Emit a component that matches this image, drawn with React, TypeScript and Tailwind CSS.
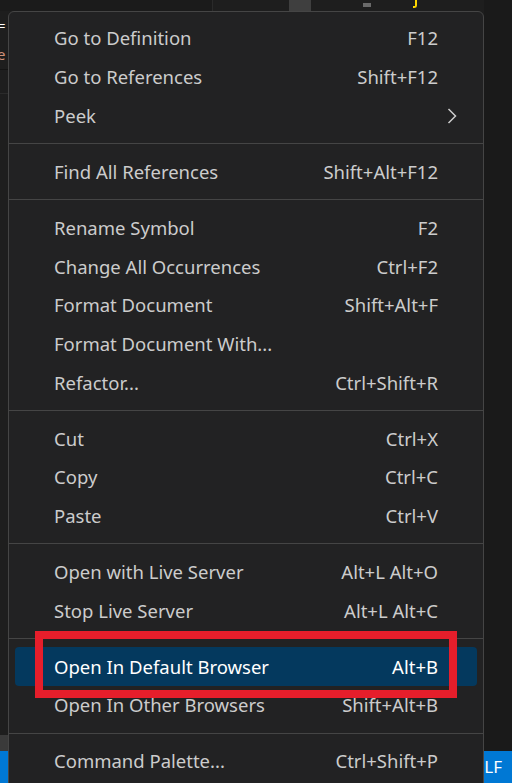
import React from "react";

type Item = { label: string; keys?: string; submenu?: boolean; active?: boolean };

const groups: Item[][] = [
  [
    { label: "Go to Definition", keys: "F12" },
    { label: "Go to References", keys: "Shift+F12" },
    { label: "Peek", submenu: true },
  ],
  [{ label: "Find All References", keys: "Shift+Alt+F12" }],
  [
    { label: "Rename Symbol", keys: "F2" },
    { label: "Change All Occurrences", keys: "Ctrl+F2" },
    { label: "Format Document", keys: "Shift+Alt+F" },
    { label: "Format Document With..." },
    { label: "Refactor...", keys: "Ctrl+Shift+R" },
  ],
  [
    { label: "Cut", keys: "Ctrl+X" },
    { label: "Copy", keys: "Ctrl+C" },
    { label: "Paste", keys: "Ctrl+V" },
  ],
  [
    { label: "Open with Live Server", keys: "Alt+L Alt+O" },
    { label: "Stop Live Server", keys: "Alt+L Alt+C" },
  ],
  [
    { label: "Open In Default Browser", keys: "Alt+B", active: true },
    { label: "Open In Other Browsers", keys: "Shift+Alt+B" },
  ],
  [{ label: "Command Palette...", keys: "Ctrl+Shift+P" }],
];

const MenuRow = ({ item }: { item: Item }) => (
  <div
    className={`mx-[6px] h-[38.7px] flex items-center justify-between rounded-[4px] pl-[39px] pr-[20px] ${
      item.active ? "bg-[#04395e] text-white" : "text-[#cccccc]"
    }`}
  >
    <span>{item.label}</span>
    <div className="flex items-center">
      <span>{item.keys}</span>
      <div className="w-[19px] flex justify-end">
        {item.submenu && (
          <svg width="10" height="16" viewBox="0 0 10 16" fill="none">
            <path d="M1.5 1 L8.5 8 L1.5 15" stroke="#cccccc" strokeWidth="1.5" />
          </svg>
        )}
      </div>
    </div>
  </div>
);

export default function App() {
  return (
    <div
      className="relative w-[512px] h-[783px] overflow-hidden bg-[#1e1e1e]"
      style={{ fontFamily: '"Noto Sans", "Open Sans", sans-serif' }}
    >
      {/* Editor behind the menu */}
      <div className="flex flex-col h-full">
        <div className="flex flex-1">
          <div className="flex-1 flex flex-col">
            {/* top strip */}
            <div className="h-[11px] flex">
              <div className="w-[212px] bg-[#1b1b1b]" />
              <div className="w-px bg-[#2a2a2a]" />
              <div className="w-[76px]" />
              <div className="w-[22px] bg-[#3f3f3f]" />
              <div className="w-[52px]" />
              <div className="w-[8px] h-[4px] mt-[3px] bg-[#6a6a6a]" />
              <div className="w-[42px]" />
              <div className="w-[4px] h-[8px] mt-0 border-r-2 border-b-2 border-[#ffd700] rounded-br-[3px]" />
            </div>
            {/* left gutter */}
            <div className="flex-1 flex flex-col w-[9px] text-[15px] leading-none">
              <div className="h-[7px]" />
              <span className="text-white -ml-[3px]">=</span>
              <div className="h-[14px]" />
              <span className="text-[#ce9178] -ml-[3px]">e</span>
              <div className="h-[8px] border-b border-[#141414]" />
              <div className="h-[24px] border-b border-[#2b2b2b]" />
            </div>
            <div className="h-[16px] flex">
              <div className="w-[9px] bg-[#3a3a3a]" />
            </div>
          </div>
          <div className="w-[28px] bg-[#1a1a1a]" />
        </div>
        <div className="h-[32px] bg-[#0078d4] flex justify-end items-center pr-[10px] text-white text-[17px]">
          LF
        </div>
      </div>

      {/* Context menu */}
      <div className="absolute left-[8px] top-[11px] w-[476px] h-[800px] rounded-[6px] border border-[#454545] bg-[#222223] pt-[7px] text-[18.5px]">
        {groups.map((group, gi) => (
          <div key={gi}>
            {gi > 0 && (
              <div className="h-[17.3px] flex items-center">
                <div className="h-px w-full bg-[#454545]" />
              </div>
            )}
            {group.map((item) => (
              <MenuRow key={item.label} item={item} />
            ))}
          </div>
        ))}
      </div>

      {/* Red annotation box */}
      <div className="absolute left-[35px] top-[631px] w-[422px] h-[67px] border-[8px] border-[#e61e2b]" />
    </div>
  );
}
